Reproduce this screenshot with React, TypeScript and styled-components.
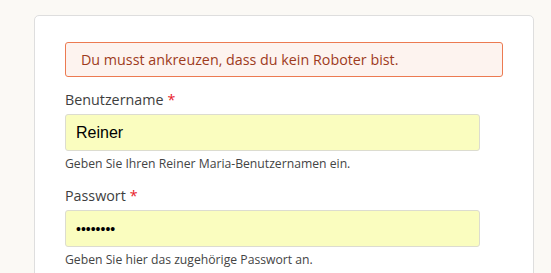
import styled, { createGlobalStyle } from 'styled-components'

const GlobalStyle = createGlobalStyle`
    html, body {
        margin: 0;
        padding: 0;
        background: #fbf9f5;
        font-family: "Open Sans", "Liberation Sans", Arial, sans-serif;
    }
`

const Page = styled.div`
    padding: 15px 18px 0 34px;
    height: 273px;
    overflow: hidden;
    box-sizing: border-box;
`

const Card = styled.div`
    width: 500px;
    box-sizing: border-box;
    background: #fff;
    border: 1px solid #dedede;
    border-radius: 5px;
    padding: 26px 30px 40px 30px;
`

const Alert = styled.div`
    box-sizing: border-box;
    height: 35px;
    width: 438px;
    display: flex;
    align-items: center;
    padding: 0 15px;
    background: #fdf3ef;
    border: 1px solid #ec7a51;
    border-radius: 3px;
    color: #9e3b1d;
    font-size: 14.3px;
`

const Field = styled.div`
    margin-top: 12px;
`

const Label = styled.label`
    display: block;
    color: #3e3e3e;
    font-size: 14.3px;
    line-height: 22px;
    margin-bottom: 3px;
`

const Star = styled.span`
    color: #e8202a;
    margin-left: 4px;
`

const Input = styled.input<{ $secret?: boolean }>`
    display: block;
    box-sizing: border-box;
    width: 415px;
    height: 37px;
    padding: 0 10px;
    margin: 0;
    background: #fafdbf;
    border: 1px solid #dcdcd0;
    border-radius: 3px;
    color: #000;
    font-family: "Liberation Sans", Arial, sans-serif;
    font-size: ${p => (p.$secret ? '14px' : '16px')};
    outline: none;
`

const Help = styled.div`
    color: #444;
    font-size: 12.2px;
    line-height: 18px;
    margin-top: 4px;
`

export default function App() {
    return (
        <>
            <GlobalStyle />
            <Page>
                <Card>
                    <Alert>Du musst ankreuzen, dass du kein Roboter bist.</Alert>
                    <Field>
                        <Label>Benutzername<Star>*</Star></Label>
                        <Input defaultValue="Reiner" readOnly />
                        <Help>Geben Sie Ihren Reiner Maria-Benutzernamen ein.</Help>
                    </Field>
                    <Field>
                        <Label>Passwort<Star>*</Star></Label>
                        <Input type="password" defaultValue="geheim12" readOnly $secret />
                        <Help>Geben Sie hier das zugehörige Passwort an.</Help>
                    </Field>
                </Card>
            </Page>
        </>
    )
}
